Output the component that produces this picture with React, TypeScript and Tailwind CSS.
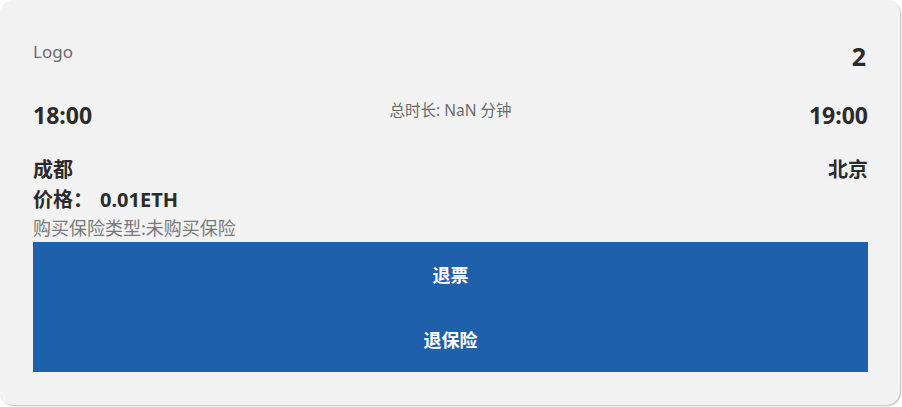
export default function App() {
  return (
    <div className="h-[407px] w-[902px] overflow-hidden bg-white font-['Noto_Sans','Noto_Sans_CJK_SC',sans-serif]">
      <div className="flex h-[405px] w-[900px] flex-col rounded-[14px] bg-[#f2f2f2] pr-[32px] pl-[33px] pt-[40px] shadow-[1px_1px_2px_rgba(0,0,0,0.28)]">
        {/* Header */}
        <div className="flex items-start justify-between">
          <span className="text-[17px] leading-6 text-[#6b6b6b]">Logo</span>
          <span className="mr-[2px] text-[25px] leading-8 font-bold text-[#2b2b2b]">2</span>
        </div>

        {/* Times */}
        <div className="mt-[27px] flex items-start justify-between">
          <span className="mt-[2px] text-[23px] leading-7 font-bold text-[#2b2b2b]">18:00</span>
          <span className="mt-[1px] text-[15.5px] leading-5 text-[#6b6b6b]">总时长: NaN 分钟</span>
          <span className="mt-[2px] text-[23px] leading-7 font-bold text-[#2b2b2b]">19:00</span>
        </div>

        {/* Cities */}
        <div className="mt-[26px] flex justify-between text-xl leading-[30px] font-bold text-[#2b2b2b]">
          <span>成都</span>
          <span>北京</span>
        </div>

        <div className="text-xl leading-[30px] font-bold text-[#2b2b2b]">
          <span>价格：</span>
          <span className="ml-[7px]">0.01ETH</span>
        </div>
        <div className="text-lg leading-[27px] text-[#7a7a7a]">购买保险类型:未购买保险</div>

        {/* Actions */}
        <div className="flex flex-col bg-[#1f60aa]">
          <button className="h-[65px] text-lg font-bold text-white">退票</button>
          <button className="h-[65px] text-lg font-bold text-white">退保险</button>
        </div>
      </div>
    </div>
  );
}
